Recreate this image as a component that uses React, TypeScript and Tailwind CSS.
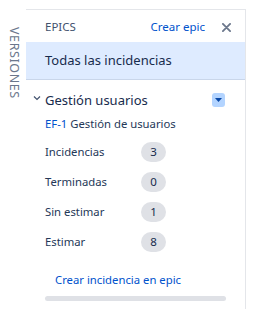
import React from "react";

const stats = [
  { label: "Incidencias", value: 3 },
  { label: "Terminadas", value: 0 },
  { label: "Sin estimar", value: 1 },
  { label: "Estimar", value: 8 },
];

export default function App() {
  return (
    <div className="flex h-[309px] w-[253px] overflow-hidden bg-white font-['Noto_Sans',sans-serif] text-[#172b4d]">
      {/* Collapsed versions tab */}
      <div className="flex w-[26px] shrink-0 justify-center pl-[2px] pt-[27px]">
        <span className="text-[12.5px] leading-none tracking-[0.6px] text-[#6b778c] [writing-mode:vertical-rl]">
          VERSIONES
        </span>
      </div>

      {/* Epics panel */}
      <div className="mt-[9px] flex w-[220px] flex-col border-t border-r border-[#e4e6ea]">
        <div className="flex h-[32px] items-center pl-[19px] pr-[14px] pt-[2px]">
          <span className="text-[11.5px] text-[#42526e]">EPICS</span>
          <span className="ml-auto text-[11.5px] text-[#0052cc]">Crear epic</span>
          <svg className="ml-[17px]" width="9" height="9" viewBox="0 0 10 10">
            <path d="M1 1L9 9M9 1L1 9" stroke="#6b778c" strokeWidth="2" strokeLinecap="round" />
          </svg>
        </div>

        <div className="flex h-[38px] items-center border-b border-[#c9d6ea] bg-[#deebff] pl-[19px] text-[13px]">
          Todas las incidencias
        </div>

        <div className="flex flex-col pl-[19px] pr-[20px] pt-[10px]">
          <div className="relative flex items-center">
            <svg className="absolute left-[-12px] top-[5px]" width="8" height="6" viewBox="0 0 8 6">
              <path d="M1 1.5L4 4.5L7 1.5" fill="none" stroke="#42526e" strokeWidth="1.2" />
            </svg>
            <span className="text-[13px] leading-[20px]">Gestión usuarios</span>
            <span className="ml-auto flex h-[14px] w-[13px] items-center justify-center rounded-[3px] bg-[#b3d4ff]">
              <svg width="7" height="4" viewBox="0 0 7 4">
                <path d="M0 0H7L3.5 4Z" fill="#0747a6" />
              </svg>
            </span>
          </div>
          <div className="mt-[5px] text-[11.3px] leading-[18px]">
            <span className="text-[#0052cc]">EF-1</span>{" "}
            <span className="text-[#253858]">Gestión de usuarios</span>
          </div>

          <div className="mt-[9px] flex flex-col gap-[10px]">
            {stats.map((s) => (
              <div key={s.label} className="flex h-[20px] items-center">
                <span className="w-[96px] text-[11.3px] text-[#253858]">{s.label}</span>
                <span className="flex h-[20px] w-[25px] items-center justify-center rounded-full bg-[#dfe1e6] text-[11.5px]">
                  {s.value}
                </span>
              </div>
            ))}
          </div>

          <div className="mt-[20px] pl-[10px] text-[11.3px] text-[#0052cc]">
            Crear incidencia en epic
          </div>
          <div className="mt-[7px] h-[5px] w-[181px] rounded-full bg-[#dfe1e6]" />
        </div>
      </div>
    </div>
  );
}
